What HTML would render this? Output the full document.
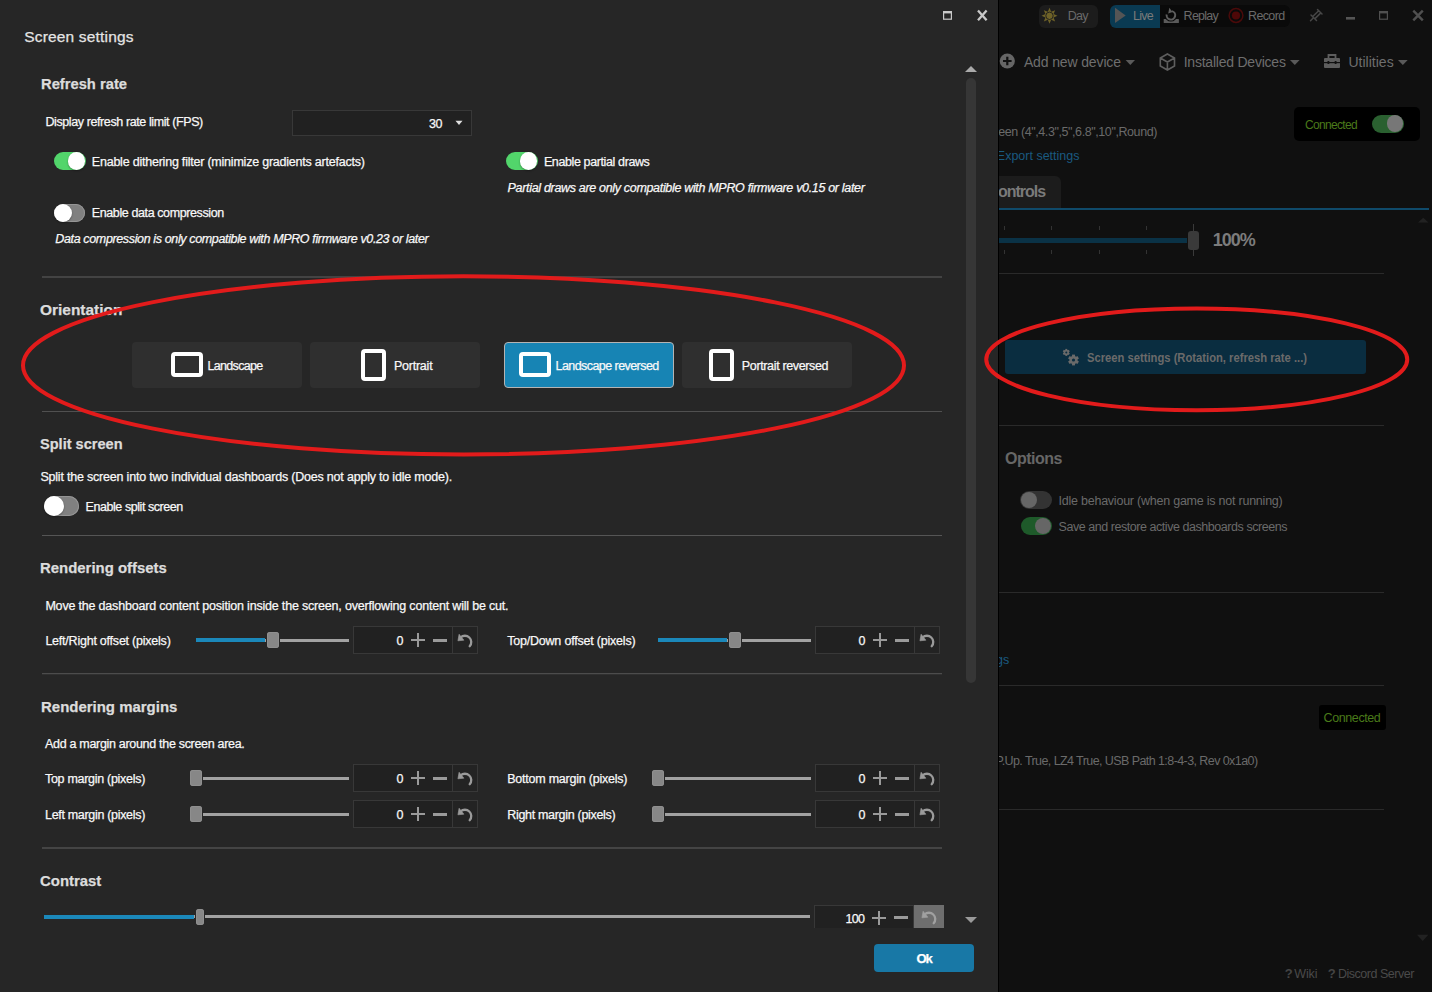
<!DOCTYPE html>
<html><head><meta charset="utf-8"><style>
html,body{margin:0;padding:0;width:1432px;height:992px;overflow:hidden;background:#101010;font-family:"Liberation Sans", sans-serif;}
#rp{position:absolute;left:0;top:0;width:1432px;height:992px;}
#dlg{position:absolute;left:0;top:0;width:998px;height:992px;background:#262626;overflow:hidden;}
</style></head><body>
<div id="rp"><div style="position:absolute;left:1038.5px;top:4.5px;width:59px;height:23px;background:#1c1c1c;border-radius:6px"></div><div style="position:absolute;left:1110px;top:4.5px;width:50px;height:23px;background:#0a3a52;border-radius:6px 0 0 6px"></div><div style="position:absolute;left:1160px;top:4.5px;width:130px;height:22px;background:#0a0a0a;border-radius:0 6px 6px 0"></div><div style="position:absolute;left:1294px;top:107px;width:126px;height:34px;background:#000000;border-radius:5px"></div><div style="position:absolute;left:1372px;top:114.5px;width:32px;height:18px;background:#2a6030;border-radius:9px"></div><div style="position:absolute;left:1386.5px;top:115.3px;width:16.5px;height:16.5px;background:#777777;border-radius:50%"></div><div style="position:absolute;left:960px;top:175.5px;width:101px;height:32.5px;background:#1c1c1c;border-radius:6px 6px 0 0"></div><div style="position:absolute;left:999px;top:208px;width:430px;height:2px;background:#0f4a6a;"></div><div style="position:absolute;left:1418px;top:217px;width:0px;height:0px;background:transparent;"></div><div style="position:absolute;left:999px;top:237.5px;width:188px;height:5px;background:#0a3246;"></div><div style="position:absolute;left:1004px;top:226px;width:1px;height:4px;background:#333333;"></div><div style="position:absolute;left:1004px;top:250px;width:1px;height:4px;background:#333333;"></div><div style="position:absolute;left:1051px;top:226px;width:1px;height:4px;background:#333333;"></div><div style="position:absolute;left:1051px;top:250px;width:1px;height:4px;background:#333333;"></div><div style="position:absolute;left:1098.5px;top:226px;width:1px;height:4px;background:#333333;"></div><div style="position:absolute;left:1098.5px;top:250px;width:1px;height:4px;background:#333333;"></div><div style="position:absolute;left:1145.6px;top:226px;width:1px;height:4px;background:#333333;"></div><div style="position:absolute;left:1145.6px;top:250px;width:1px;height:4px;background:#333333;"></div><div style="position:absolute;left:1193px;top:224px;width:1px;height:32px;background:#3a3a3a;"></div><div style="position:absolute;left:1187.5px;top:230.5px;width:11px;height:19.5px;background:#3a3a3a;border-radius:3px"></div><div style="position:absolute;left:999px;top:273px;width:385px;height:1px;background:#2a2a2a;"></div><div style="position:absolute;left:1005px;top:340px;width:361px;height:34px;background:#0a2d40;border-radius:3px"></div><div style="position:absolute;left:999px;top:425px;width:385px;height:1px;background:#2a2a2a;"></div><div style="position:absolute;left:1020px;top:491px;width:32px;height:18px;background:#333333;border-radius:9px"></div><div style="position:absolute;left:1021px;top:492px;width:16px;height:16px;background:#666666;border-radius:50%"></div><div style="position:absolute;left:1021px;top:517px;width:31px;height:17.5px;background:#1e5a2a;border-radius:9px"></div><div style="position:absolute;left:1035px;top:517.8px;width:16px;height:16px;background:#666666;border-radius:50%"></div><div style="position:absolute;left:999px;top:592px;width:385px;height:1px;background:#2a2a2a;"></div><div style="position:absolute;left:999px;top:685px;width:385px;height:1px;background:#2a2a2a;"></div><div style="position:absolute;left:1319px;top:704.5px;width:66.5px;height:25px;background:#000000;border-radius:3px"></div><div style="position:absolute;left:999px;top:809px;width:385px;height:1px;background:#2a2a2a;"></div><div style="position:absolute;left:1067.70px;top:10.00px;font-size:12.5px;line-height:12.5px;font-weight:400;font-style:normal;color:#6a6a6a;letter-spacing:-0.745px;white-space:pre;">Day</div><div style="position:absolute;left:1133.00px;top:10.00px;font-size:12.5px;line-height:12.5px;font-weight:400;font-style:normal;color:#7a7a7a;letter-spacing:-0.734px;white-space:pre;">Live</div><div style="position:absolute;left:1183.60px;top:10.00px;font-size:12.5px;line-height:12.5px;font-weight:400;font-style:normal;color:#6a6a6a;letter-spacing:-0.737px;white-space:pre;">Replay</div><div style="position:absolute;left:1248.00px;top:10.00px;font-size:12.5px;line-height:12.5px;font-weight:400;font-style:normal;color:#6a6a6a;letter-spacing:-0.633px;white-space:pre;">Record</div><div style="position:absolute;left:1023.90px;top:55.00px;font-size:14px;line-height:14px;font-weight:400;font-style:normal;color:#6e6e6e;letter-spacing:-0.132px;white-space:pre;">Add new device</div><div style="position:absolute;left:1183.70px;top:55.00px;font-size:14px;line-height:14px;font-weight:400;font-style:normal;color:#6e6e6e;letter-spacing:-0.225px;white-space:pre;">Installed Devices</div><div style="position:absolute;left:1348.40px;top:55.00px;font-size:14px;line-height:14px;font-weight:400;font-style:normal;color:#6e6e6e;letter-spacing:0.019px;white-space:pre;">Utilities</div><div style="position:absolute;left:1305.00px;top:119.00px;font-size:12px;line-height:12px;font-weight:400;font-style:normal;color:#4a7a1a;letter-spacing:-0.672px;white-space:pre;">Connected</div><div style="position:absolute;left:994.50px;top:126.00px;font-size:12.5px;line-height:12.5px;font-weight:400;font-style:normal;color:#6a6a6a;letter-spacing:-0.415px;white-space:pre;">reen (4",4.3",5",6.8",10",Round)</div><div style="position:absolute;left:996.81px;top:150.00px;font-size:12.5px;line-height:12.5px;font-weight:400;font-style:normal;color:#1a5a80;letter-spacing:0.000px;white-space:pre;">Export settings</div><div style="position:absolute;left:998.00px;top:184.00px;font-size:16px;line-height:16px;font-weight:700;font-style:normal;color:#7a7a7a;letter-spacing:-1.031px;white-space:pre;">ontrols</div><div style="position:absolute;left:1212.80px;top:231.00px;font-size:18px;line-height:18px;font-weight:700;font-style:normal;color:#7c7c7c;letter-spacing:-1.012px;white-space:pre;">100%</div><div style="position:absolute;left:1087.20px;top:352.00px;font-size:12.5px;line-height:12.5px;font-weight:700;font-style:normal;color:#6a6a6a;letter-spacing:0.000px;white-space:pre;transform:scaleX(0.8972);transform-origin:0 0;">Screen settings (Rotation, refresh rate ...)</div><div style="position:absolute;left:1005.00px;top:451.00px;font-size:16px;line-height:16px;font-weight:700;font-style:normal;color:#666666;letter-spacing:-0.491px;white-space:pre;">Options</div><div style="position:absolute;left:1058.50px;top:495.00px;font-size:12.5px;line-height:12.5px;font-weight:400;font-style:normal;color:#6a6a6a;letter-spacing:-0.231px;white-space:pre;">Idle behaviour (when game is not running)</div><div style="position:absolute;left:1058.50px;top:521.00px;font-size:12.5px;line-height:12.5px;font-weight:400;font-style:normal;color:#6a6a6a;letter-spacing:-0.449px;white-space:pre;">Save and restore active dashboards screens</div><div style="position:absolute;left:880.77px;top:654.00px;font-size:12.5px;line-height:12.5px;font-weight:400;font-style:normal;color:#1a5a80;letter-spacing:0.000px;white-space:pre;">Import / Export settings</div><div style="position:absolute;left:1323.60px;top:712.00px;font-size:12.5px;line-height:12.5px;font-weight:400;font-style:normal;color:#4a7a1a;letter-spacing:-0.408px;white-space:pre;">Connected</div><div style="position:absolute;left:995.50px;top:755.00px;font-size:12.5px;line-height:12.5px;font-weight:400;font-style:normal;color:#6a6a6a;letter-spacing:-0.578px;white-space:pre;">P.Up. True, LZ4 True, USB Path 1:8-4-3, Rev 0x1a0)</div><div style="position:absolute;left:1294.30px;top:968.00px;font-size:12.5px;line-height:12.5px;font-weight:400;font-style:normal;color:#4a4a4a;letter-spacing:-0.152px;white-space:pre;">Wiki</div><div style="position:absolute;left:1337.90px;top:968.00px;font-size:12.5px;line-height:12.5px;font-weight:400;font-style:normal;color:#4a4a4a;letter-spacing:-0.477px;white-space:pre;">Discord Server</div><div style="position:absolute;left:1284.70px;top:967.00px;font-size:13px;line-height:13px;font-weight:700;font-style:normal;color:#444444;letter-spacing:0.047px;white-space:pre;">?</div><div style="position:absolute;left:1327.70px;top:967.00px;font-size:13px;line-height:13px;font-weight:700;font-style:normal;color:#444444;letter-spacing:0.047px;white-space:pre;">?</div><svg style="position:absolute;left:0;top:0" width="1432" height="992"><polygon points="1049.50,7.80 1051.18,11.73 1055.16,10.14 1053.57,14.12 1057.50,15.80 1053.57,17.48 1055.16,21.46 1051.18,19.87 1049.50,23.80 1047.82,19.87 1043.84,21.46 1045.43,17.48 1041.50,15.80 1045.43,14.12 1043.84,10.14 1047.82,11.73" fill="#6e6228"/><circle cx="1049.5" cy="15.8" r="3.7" fill="none" stroke="#1c1c1c" stroke-width="0.9"/><polygon points="1115,7.7 1125.7,15.5 1115,23" fill="#555"/><rect x="1163.7" y="19" width="15.2" height="4" rx="0.5" fill="#5a5a5a"/><circle cx="1170.9" cy="15.3" r="4.3" fill="none" stroke="#0a0a0a" stroke-width="4"/><path d="M1172.01 11.15 A4.3 4.3 0 1 1 1166.67 14.55" fill="none" stroke="#5e5e5e" stroke-width="2"/><polygon points="1169.3,7.8 1172.6,12 1168.2,13.6" fill="#5e5e5e"/><circle cx="1236" cy="15.5" r="6.9" fill="none" stroke="#4a0a0a" stroke-width="1.5"/><circle cx="1236" cy="15.5" r="4.1" fill="#4e0808"/><path d="M1317.5 9.5 L1322 14 M1311 15 L1316.5 20.5 M1318.7 10.8 L1313 16.3 M1320.8 12.9 L1315.2 18.4 M1313.2 18 L1310.5 20.8" stroke="#474747" stroke-width="1.5" fill="none" stroke-linecap="round"/><rect x="1346" y="17" width="9" height="2.6" fill="#555"/><rect x="1379.6" y="11.8" width="7.8" height="7.4" fill="none" stroke="#505050" stroke-width="1.2"/><rect x="1379" y="11" width="9" height="2.4" fill="#505050"/><path d="M1413.3 10.6 L1422.8 20.4 M1422.8 10.6 L1413.3 20.4" stroke="#505050" stroke-width="2.4"/><circle cx="1007.3" cy="61" r="7.6" fill="#666"/><path d="M1003 61 H1011.6 M1007.3 56.7 V65.3" stroke="#111" stroke-width="2.2"/><polygon points="1125.6,60 1135,60 1130.3,65" fill="#5a5a5a"/><path d="M1167.4 54 L1174.5 58 L1174.5 66 L1167.4 70 L1160.3 66 L1160.3 58 Z M1160.3 58 L1167.4 62 L1174.5 58 M1167.4 62 V70" fill="none" stroke="#5e5e5e" stroke-width="1.6"/><polygon points="1290,60 1299.6,60 1294.8,65" fill="#5a5a5a"/><path d="M1328.5 58 V55 H1335.5 V58" fill="none" stroke="#5e5e5e" stroke-width="1.8"/><rect x="1324" y="58" width="16" height="10" rx="1" fill="#5e5e5e"/><rect x="1324" y="62" width="16" height="1.2" fill="#111"/><rect x="1327.5" y="61" width="1.8" height="3" fill="#111"/><rect x="1334.7" y="61" width="1.8" height="3" fill="#111"/><polygon points="1398,60 1407.7,60 1402.85,65" fill="#5a5a5a"/><circle cx="1066.3" cy="352.4" r="2.62" fill="#6a6a6a"/><rect x="1065.34" y="348.90" width="1.93" height="7.00" fill="#6a6a6a" transform="rotate(0 1066.3 352.4)"/><rect x="1065.34" y="348.90" width="1.93" height="7.00" fill="#6a6a6a" transform="rotate(60 1066.3 352.4)"/><rect x="1065.34" y="348.90" width="1.93" height="7.00" fill="#6a6a6a" transform="rotate(120 1066.3 352.4)"/><circle cx="1066.3" cy="352.4" r="1.0" fill="#0a2d40"/><circle cx="1073.5" cy="360" r="4.05" fill="#6a6a6a"/><rect x="1072.02" y="354.60" width="2.97" height="10.80" fill="#6a6a6a" transform="rotate(0 1073.5 360)"/><rect x="1072.02" y="354.60" width="2.97" height="10.80" fill="#6a6a6a" transform="rotate(60 1073.5 360)"/><rect x="1072.02" y="354.60" width="2.97" height="10.80" fill="#6a6a6a" transform="rotate(120 1073.5 360)"/><circle cx="1073.5" cy="360" r="1.6" fill="#0a2d40"/><polygon points="1418,222.6 1428.5,222.6 1423.25,217.8" fill="#222"/><polygon points="1417,934.7 1428.4,934.7 1422.7,941" fill="#222"/></svg></div>
<div style="position:absolute;left:998px;top:0;width:1px;height:992px;background:#000000"></div>
<div id="dlg"><div style="position:absolute;left:292px;top:110px;width:178px;height:23.5px;border:1px solid #383838;background:#212121"></div><svg style="position:absolute;left:455px;top:120px" width="9" height="6"><polygon points="0.5,0.8 7.5,0.8 4,5" fill="#e0e0e0"/></svg><div style="position:absolute;left:54px;top:152px;width:32px;height:18px;border-radius:9.0px;background:#52d56b;"></div><div style="position:absolute;left:67.5px;top:152.25px;width:17.5px;height:17.5px;border-radius:50%;background:#ffffff;box-shadow:0 1px 2px rgba(0,0,0,0.35);"></div><div style="position:absolute;left:506px;top:152px;width:32px;height:18px;border-radius:9.0px;background:#52d56b;"></div><div style="position:absolute;left:519.5px;top:152.25px;width:17.5px;height:17.5px;border-radius:50%;background:#ffffff;box-shadow:0 1px 2px rgba(0,0,0,0.35);"></div><div style="position:absolute;left:54px;top:204px;width:31px;height:18px;border-radius:9.0px;background:#808080;box-shadow:inset 0 0 0 1px #959595;"></div><div style="position:absolute;left:54px;top:203.6px;width:18px;height:18px;border-radius:50%;background:#ffffff;box-shadow:0 1px 2px rgba(0,0,0,0.35);"></div><div style="position:absolute;left:42px;top:276px;width:900px;height:2px;background:#434343"></div><div style="position:absolute;left:132px;top:342px;width:170px;height:45.5px;border-radius:4px;background:#2f2f2f"></div><div style="position:absolute;left:310px;top:342px;width:170px;height:45.5px;border-radius:4px;background:#2f2f2f"></div><div style="position:absolute;left:504px;top:342px;width:168px;height:43.5px;border:1px solid #b4b4b4;border-radius:4px;background:#1784b4"></div><div style="position:absolute;left:682px;top:342px;width:170px;height:45.5px;border-radius:4px;background:#2f2f2f"></div><div style="position:absolute;left:171.3px;top:352.2px;width:23.6px;height:16.6px;border:4px solid #ffffff;border-radius:4px"></div><div style="position:absolute;left:361px;top:348.6px;width:17px;height:24.4px;border:4px solid #ffffff;border-radius:4px"></div><div style="position:absolute;left:519px;top:352px;width:24px;height:17px;border:4px solid #ffffff;border-radius:4px"></div><div style="position:absolute;left:709px;top:348.6px;width:17px;height:24.4px;border:4px solid #ffffff;border-radius:4px"></div><div style="position:absolute;left:42px;top:411px;width:900px;height:1px;background:#505050"></div><div style="position:absolute;left:44px;top:496px;width:35px;height:20px;border-radius:10.0px;background:#808080;box-shadow:inset 0 0 0 1px #959595;"></div><div style="position:absolute;left:44px;top:496px;width:20px;height:20px;border-radius:50%;background:#ffffff;box-shadow:0 1px 2px rgba(0,0,0,0.35);"></div><div style="position:absolute;left:42px;top:535px;width:900px;height:1px;background:#555555"></div><div style="position:absolute;left:196px;top:639px;width:153px;height:3px;background:#a2a2a2"></div><div style="position:absolute;left:196px;top:638px;width:69px;height:4px;background:#1b88ba"></div><div style="position:absolute;left:266px;top:632px;width:14px;height:16px;background:#262626"></div><div style="position:absolute;left:267px;top:632px;width:12px;height:16px;border-radius:3px;background:#878787;box-shadow:inset 0 0 0 1px #8f8f8f"></div><div style="position:absolute;left:353px;top:626px;width:98px;height:26px;border:1px solid #383838;background:#212121"></div><div style="position:absolute;left:453px;top:626px;width:24px;height:26px;border:1px solid #383838;border-left:none;background:#232323"></div><div style="position:absolute;left:411px;top:638.9px;width:14px;height:2.2px;background:#9a9a9a"></div><div style="position:absolute;left:416.9px;top:633px;width:2.2px;height:14px;background:#9a9a9a"></div><div style="position:absolute;left:433px;top:638.5px;width:14px;height:3px;background:#9a9a9a"></div><svg style="position:absolute;left:455.3px;top:631.8px" width="20" height="20" viewBox="-10 -10 20 20"><path d="M-4.45 -4.45 A6.3 6.3 0 0 1 4.68 4.22" fill="none" stroke="#9a9a9a" stroke-width="2.3" stroke-linecap="round"/><path d="M-5.9 -7.8 L-7.1 -1.2 L-1.1 -1.8 Z" fill="#9a9a9a" stroke="#9a9a9a" stroke-width="0.6" stroke-linejoin="round"/></svg><div style="position:absolute;left:658px;top:639px;width:153px;height:3px;background:#a2a2a2"></div><div style="position:absolute;left:658px;top:638px;width:69px;height:4px;background:#1b88ba"></div><div style="position:absolute;left:728px;top:632px;width:14px;height:16px;background:#262626"></div><div style="position:absolute;left:729px;top:632px;width:12px;height:16px;border-radius:3px;background:#878787;box-shadow:inset 0 0 0 1px #8f8f8f"></div><div style="position:absolute;left:815px;top:626px;width:98px;height:26px;border:1px solid #383838;background:#212121"></div><div style="position:absolute;left:915px;top:626px;width:24px;height:26px;border:1px solid #383838;border-left:none;background:#232323"></div><div style="position:absolute;left:873px;top:638.9px;width:14px;height:2.2px;background:#9a9a9a"></div><div style="position:absolute;left:878.9px;top:633px;width:2.2px;height:14px;background:#9a9a9a"></div><div style="position:absolute;left:895px;top:638.5px;width:14px;height:3px;background:#9a9a9a"></div><svg style="position:absolute;left:917.3px;top:631.8px" width="20" height="20" viewBox="-10 -10 20 20"><path d="M-4.45 -4.45 A6.3 6.3 0 0 1 4.68 4.22" fill="none" stroke="#9a9a9a" stroke-width="2.3" stroke-linecap="round"/><path d="M-5.9 -7.8 L-7.1 -1.2 L-1.1 -1.8 Z" fill="#9a9a9a" stroke="#9a9a9a" stroke-width="0.6" stroke-linejoin="round"/></svg><div style="position:absolute;left:42px;top:673px;width:900px;height:1px;background:#4c4c4c"></div><div style="position:absolute;left:42px;top:674px;width:900px;height:1px;background:#303030"></div><div style="position:absolute;left:190px;top:777px;width:159px;height:3px;background:#a2a2a2"></div><div style="position:absolute;left:189px;top:770px;width:14px;height:16px;background:#262626"></div><div style="position:absolute;left:190px;top:770px;width:12px;height:16px;border-radius:3px;background:#878787;box-shadow:inset 0 0 0 1px #8f8f8f"></div><div style="position:absolute;left:353px;top:764px;width:98px;height:26px;border:1px solid #383838;background:#212121"></div><div style="position:absolute;left:453px;top:764px;width:24px;height:26px;border:1px solid #383838;border-left:none;background:#232323"></div><div style="position:absolute;left:411px;top:776.9px;width:14px;height:2.2px;background:#9a9a9a"></div><div style="position:absolute;left:416.9px;top:771px;width:2.2px;height:14px;background:#9a9a9a"></div><div style="position:absolute;left:433px;top:776.5px;width:14px;height:3px;background:#9a9a9a"></div><svg style="position:absolute;left:455.3px;top:769.8px" width="20" height="20" viewBox="-10 -10 20 20"><path d="M-4.45 -4.45 A6.3 6.3 0 0 1 4.68 4.22" fill="none" stroke="#9a9a9a" stroke-width="2.3" stroke-linecap="round"/><path d="M-5.9 -7.8 L-7.1 -1.2 L-1.1 -1.8 Z" fill="#9a9a9a" stroke="#9a9a9a" stroke-width="0.6" stroke-linejoin="round"/></svg><div style="position:absolute;left:652px;top:777px;width:159px;height:3px;background:#a2a2a2"></div><div style="position:absolute;left:651px;top:770px;width:14px;height:16px;background:#262626"></div><div style="position:absolute;left:652px;top:770px;width:12px;height:16px;border-radius:3px;background:#878787;box-shadow:inset 0 0 0 1px #8f8f8f"></div><div style="position:absolute;left:815px;top:764px;width:98px;height:26px;border:1px solid #383838;background:#212121"></div><div style="position:absolute;left:915px;top:764px;width:24px;height:26px;border:1px solid #383838;border-left:none;background:#232323"></div><div style="position:absolute;left:873px;top:776.9px;width:14px;height:2.2px;background:#9a9a9a"></div><div style="position:absolute;left:878.9px;top:771px;width:2.2px;height:14px;background:#9a9a9a"></div><div style="position:absolute;left:895px;top:776.5px;width:14px;height:3px;background:#9a9a9a"></div><svg style="position:absolute;left:917.3px;top:769.8px" width="20" height="20" viewBox="-10 -10 20 20"><path d="M-4.45 -4.45 A6.3 6.3 0 0 1 4.68 4.22" fill="none" stroke="#9a9a9a" stroke-width="2.3" stroke-linecap="round"/><path d="M-5.9 -7.8 L-7.1 -1.2 L-1.1 -1.8 Z" fill="#9a9a9a" stroke="#9a9a9a" stroke-width="0.6" stroke-linejoin="round"/></svg><div style="position:absolute;left:190px;top:813px;width:159px;height:3px;background:#a2a2a2"></div><div style="position:absolute;left:189px;top:806px;width:14px;height:16px;background:#262626"></div><div style="position:absolute;left:190px;top:806px;width:12px;height:16px;border-radius:3px;background:#878787;box-shadow:inset 0 0 0 1px #8f8f8f"></div><div style="position:absolute;left:353px;top:800px;width:98px;height:26px;border:1px solid #383838;background:#212121"></div><div style="position:absolute;left:453px;top:800px;width:24px;height:26px;border:1px solid #383838;border-left:none;background:#232323"></div><div style="position:absolute;left:411px;top:812.9px;width:14px;height:2.2px;background:#9a9a9a"></div><div style="position:absolute;left:416.9px;top:807px;width:2.2px;height:14px;background:#9a9a9a"></div><div style="position:absolute;left:433px;top:812.5px;width:14px;height:3px;background:#9a9a9a"></div><svg style="position:absolute;left:455.3px;top:805.8px" width="20" height="20" viewBox="-10 -10 20 20"><path d="M-4.45 -4.45 A6.3 6.3 0 0 1 4.68 4.22" fill="none" stroke="#9a9a9a" stroke-width="2.3" stroke-linecap="round"/><path d="M-5.9 -7.8 L-7.1 -1.2 L-1.1 -1.8 Z" fill="#9a9a9a" stroke="#9a9a9a" stroke-width="0.6" stroke-linejoin="round"/></svg><div style="position:absolute;left:652px;top:813px;width:159px;height:3px;background:#a2a2a2"></div><div style="position:absolute;left:651px;top:806px;width:14px;height:16px;background:#262626"></div><div style="position:absolute;left:652px;top:806px;width:12px;height:16px;border-radius:3px;background:#878787;box-shadow:inset 0 0 0 1px #8f8f8f"></div><div style="position:absolute;left:815px;top:800px;width:98px;height:26px;border:1px solid #383838;background:#212121"></div><div style="position:absolute;left:915px;top:800px;width:24px;height:26px;border:1px solid #383838;border-left:none;background:#232323"></div><div style="position:absolute;left:873px;top:812.9px;width:14px;height:2.2px;background:#9a9a9a"></div><div style="position:absolute;left:878.9px;top:807px;width:2.2px;height:14px;background:#9a9a9a"></div><div style="position:absolute;left:895px;top:812.5px;width:14px;height:3px;background:#9a9a9a"></div><svg style="position:absolute;left:917.3px;top:805.8px" width="20" height="20" viewBox="-10 -10 20 20"><path d="M-4.45 -4.45 A6.3 6.3 0 0 1 4.68 4.22" fill="none" stroke="#9a9a9a" stroke-width="2.3" stroke-linecap="round"/><path d="M-5.9 -7.8 L-7.1 -1.2 L-1.1 -1.8 Z" fill="#9a9a9a" stroke="#9a9a9a" stroke-width="0.6" stroke-linejoin="round"/></svg><div style="position:absolute;left:42px;top:847px;width:900px;height:2px;background:#444444"></div><div style="position:absolute;left:44px;top:915px;width:766px;height:3px;background:#a2a2a2"></div><div style="position:absolute;left:44px;top:915px;width:150px;height:4px;background:#1b88ba"></div><div style="position:absolute;left:195px;top:909px;width:10px;height:16px;background:#262626"></div><div style="position:absolute;left:196px;top:909px;width:8px;height:16px;border-radius:3px;background:#878787;box-shadow:inset 0 0 0 1px #8f8f8f"></div><div style="position:absolute;left:814px;top:905px;width:98px;height:22px;border:1px solid #383838;border-bottom:none;background:#212121"></div><div style="position:absolute;left:914px;top:905px;width:30px;height:23px;background:#6e6e6e"></div><div style="position:absolute;left:872px;top:916.9px;width:14px;height:2.2px;background:#9a9a9a"></div><div style="position:absolute;left:877.9px;top:911px;width:2.2px;height:14px;background:#9a9a9a"></div><div style="position:absolute;left:894px;top:915.7px;width:14px;height:3px;background:#9a9a9a"></div><svg style="position:absolute;left:918.6px;top:908.5px" width="20" height="20" viewBox="-10 -10 20 20"><path d="M-4.45 -4.45 A6.3 6.3 0 0 1 4.68 4.22" fill="none" stroke="#a0a0a0" stroke-width="2.3" stroke-linecap="round"/><path d="M-5.9 -7.8 L-7.1 -1.2 L-1.1 -1.8 Z" fill="#a0a0a0" stroke="#a0a0a0" stroke-width="0.6" stroke-linejoin="round"/></svg><div style="position:absolute;left:0;top:928px;width:960px;height:64px;background:#262626"></div><svg style="position:absolute;left:964px;top:916px" width="14" height="8"><polygon points="1,1 13,1 7,7" fill="#9a9a9a"/></svg><div style="position:absolute;left:874px;top:944px;width:100px;height:28px;border-radius:4px;background:#1878a6"></div><svg style="position:absolute;left:940px;top:8px" width="50" height="16"><rect x="3.6" y="3.6" width="7.8" height="7.6" fill="none" stroke="#c8c8c8" stroke-width="1.2"/><rect x="3" y="3" width="9" height="2.4" fill="#c8c8c8"/><path d="M38 2.4 L46.6 12.2 M46.6 2.4 L38 12.2" stroke="#c8c8c8" stroke-width="2.3"/></svg><svg style="position:absolute;left:960px;top:60px" width="24" height="20"><polygon points="5,12 17,12 11,6" fill="#aaaaaa"/></svg><div style="position:absolute;left:966px;top:77.7px;width:10px;height:605.6px;border-radius:5px;background:#363636"></div><div style="position:absolute;left:24.20px;top:29.00px;font-size:15.5px;line-height:15.5px;font-weight:400;font-style:normal;color:#e4e4e4;letter-spacing:0.177px;white-space:pre;-webkit-text-stroke:0.25px #e4e4e4;">Screen settings</div><div style="position:absolute;left:40.80px;top:76.00px;font-size:15px;line-height:15px;font-weight:700;font-style:normal;color:#dcdcdc;letter-spacing:0.000px;white-space:pre;transform:scaleX(0.9823);transform-origin:0 0;-webkit-text-stroke:0.25px #dcdcdc;">Refresh rate</div><div style="position:absolute;left:45.40px;top:116.00px;font-size:12.5px;line-height:12.5px;font-weight:400;font-style:normal;color:#f8f8f8;letter-spacing:-0.396px;white-space:pre;-webkit-text-stroke:0.25px #f8f8f8;">Display refresh rate limit (FPS)</div><div style="position:absolute;left:429.00px;top:118.00px;font-size:12.5px;line-height:12.5px;font-weight:400;font-style:normal;color:#f8f8f8;letter-spacing:-0.453px;white-space:pre;-webkit-text-stroke:0.25px #f8f8f8;">30</div><div style="position:absolute;left:91.80px;top:156.00px;font-size:12.5px;line-height:12.5px;font-weight:400;font-style:normal;color:#f8f8f8;letter-spacing:-0.220px;white-space:pre;-webkit-text-stroke:0.25px #f8f8f8;">Enable dithering filter (minimize gradients artefacts)</div><div style="position:absolute;left:543.90px;top:156.00px;font-size:12.5px;line-height:12.5px;font-weight:400;font-style:normal;color:#f8f8f8;letter-spacing:-0.383px;white-space:pre;-webkit-text-stroke:0.25px #f8f8f8;">Enable partial draws</div><div style="position:absolute;left:507.60px;top:182.00px;font-size:12.5px;line-height:12.5px;font-weight:400;font-style:italic;color:#f8f8f8;letter-spacing:-0.323px;white-space:pre;-webkit-text-stroke:0.25px #f8f8f8;">Partial draws are only compatible with MPRO firmware v0.15 or later</div><div style="position:absolute;left:91.80px;top:207.00px;font-size:12.5px;line-height:12.5px;font-weight:400;font-style:normal;color:#f8f8f8;letter-spacing:-0.394px;white-space:pre;-webkit-text-stroke:0.25px #f8f8f8;">Enable data compression</div><div style="position:absolute;left:55.30px;top:233.00px;font-size:12.5px;line-height:12.5px;font-weight:400;font-style:italic;color:#f8f8f8;letter-spacing:-0.363px;white-space:pre;-webkit-text-stroke:0.25px #f8f8f8;">Data compression is only compatible with MPRO firmware v0.23 or later</div><div style="position:absolute;left:40.30px;top:302.00px;font-size:15px;line-height:15px;font-weight:700;font-style:normal;color:#dcdcdc;letter-spacing:0.000px;white-space:pre;transform:scaleX(1.0298);transform-origin:0 0;-webkit-text-stroke:0.25px #dcdcdc;">Orientation</div><div style="position:absolute;left:207.50px;top:360.00px;font-size:12.5px;line-height:12.5px;font-weight:400;font-style:normal;color:#f8f8f8;letter-spacing:-0.675px;white-space:pre;-webkit-text-stroke:0.25px #f8f8f8;">Landscape</div><div style="position:absolute;left:393.90px;top:360.00px;font-size:12.5px;line-height:12.5px;font-weight:400;font-style:normal;color:#f8f8f8;letter-spacing:-0.225px;white-space:pre;-webkit-text-stroke:0.25px #f8f8f8;">Portrait</div><div style="position:absolute;left:555.50px;top:360.00px;font-size:12.5px;line-height:12.5px;font-weight:400;font-style:normal;color:#f8f8f8;letter-spacing:-0.560px;white-space:pre;-webkit-text-stroke:0.25px #f8f8f8;">Landscape reversed</div><div style="position:absolute;left:741.80px;top:360.00px;font-size:12.5px;line-height:12.5px;font-weight:400;font-style:normal;color:#f8f8f8;letter-spacing:-0.353px;white-space:pre;-webkit-text-stroke:0.25px #f8f8f8;">Portrait reversed</div><div style="position:absolute;left:40.40px;top:436.00px;font-size:15px;line-height:15px;font-weight:700;font-style:normal;color:#dcdcdc;letter-spacing:0.000px;white-space:pre;transform:scaleX(0.9712);transform-origin:0 0;-webkit-text-stroke:0.25px #dcdcdc;">Split screen</div><div style="position:absolute;left:40.40px;top:471.00px;font-size:12.5px;line-height:12.5px;font-weight:400;font-style:normal;color:#f8f8f8;letter-spacing:-0.202px;white-space:pre;-webkit-text-stroke:0.25px #f8f8f8;">Split the screen into two individual dashboards (Does not apply to idle mode).</div><div style="position:absolute;left:85.60px;top:501.00px;font-size:12.5px;line-height:12.5px;font-weight:400;font-style:normal;color:#f8f8f8;letter-spacing:-0.438px;white-space:pre;-webkit-text-stroke:0.25px #f8f8f8;">Enable split screen</div><div style="position:absolute;left:40.40px;top:560.00px;font-size:15px;line-height:15px;font-weight:700;font-style:normal;color:#dcdcdc;letter-spacing:0.000px;white-space:pre;transform:scaleX(0.9944);transform-origin:0 0;-webkit-text-stroke:0.25px #dcdcdc;">Rendering offsets</div><div style="position:absolute;left:45.40px;top:600.00px;font-size:12.5px;line-height:12.5px;font-weight:400;font-style:normal;color:#f8f8f8;letter-spacing:-0.189px;white-space:pre;-webkit-text-stroke:0.25px #f8f8f8;">Move the dashboard content position inside the screen, overflowing content will be cut.</div><div style="position:absolute;left:45.40px;top:635.00px;font-size:12.5px;line-height:12.5px;font-weight:400;font-style:normal;color:#f8f8f8;letter-spacing:-0.227px;white-space:pre;-webkit-text-stroke:0.25px #f8f8f8;">Left/Right offset (pixels)</div><div style="position:absolute;left:396.40px;top:635.00px;font-size:12.5px;line-height:12.5px;font-weight:400;font-style:normal;color:#f8f8f8;letter-spacing:0.047px;white-space:pre;-webkit-text-stroke:0.25px #f8f8f8;">0</div><div style="position:absolute;left:507.20px;top:635.00px;font-size:12.5px;line-height:12.5px;font-weight:400;font-style:normal;color:#f8f8f8;letter-spacing:-0.207px;white-space:pre;-webkit-text-stroke:0.25px #f8f8f8;">Top/Down offset (pixels)</div><div style="position:absolute;left:858.50px;top:635.00px;font-size:12.5px;line-height:12.5px;font-weight:400;font-style:normal;color:#f8f8f8;letter-spacing:0.047px;white-space:pre;-webkit-text-stroke:0.25px #f8f8f8;">0</div><div style="position:absolute;left:40.60px;top:699.00px;font-size:15px;line-height:15px;font-weight:700;font-style:normal;color:#dcdcdc;letter-spacing:0.000px;white-space:pre;transform:scaleX(0.9978);transform-origin:0 0;-webkit-text-stroke:0.25px #dcdcdc;">Rendering margins</div><div style="position:absolute;left:45.00px;top:738.00px;font-size:12.5px;line-height:12.5px;font-weight:400;font-style:normal;color:#f8f8f8;letter-spacing:-0.307px;white-space:pre;-webkit-text-stroke:0.25px #f8f8f8;">Add a margin around the screen area.</div><div style="position:absolute;left:45.00px;top:773.00px;font-size:12.5px;line-height:12.5px;font-weight:400;font-style:normal;color:#f8f8f8;letter-spacing:-0.294px;white-space:pre;-webkit-text-stroke:0.25px #f8f8f8;">Top margin (pixels)</div><div style="position:absolute;left:396.50px;top:773.00px;font-size:12.5px;line-height:12.5px;font-weight:400;font-style:normal;color:#f8f8f8;letter-spacing:0.047px;white-space:pre;-webkit-text-stroke:0.25px #f8f8f8;">0</div><div style="position:absolute;left:507.20px;top:773.00px;font-size:12.5px;line-height:12.5px;font-weight:400;font-style:normal;color:#f8f8f8;letter-spacing:-0.229px;white-space:pre;-webkit-text-stroke:0.25px #f8f8f8;">Bottom margin (pixels)</div><div style="position:absolute;left:858.50px;top:773.00px;font-size:12.5px;line-height:12.5px;font-weight:400;font-style:normal;color:#f8f8f8;letter-spacing:0.047px;white-space:pre;-webkit-text-stroke:0.25px #f8f8f8;">0</div><div style="position:absolute;left:45.00px;top:809.00px;font-size:12.5px;line-height:12.5px;font-weight:400;font-style:normal;color:#f8f8f8;letter-spacing:-0.315px;white-space:pre;-webkit-text-stroke:0.25px #f8f8f8;">Left margin (pixels)</div><div style="position:absolute;left:396.50px;top:809.00px;font-size:12.5px;line-height:12.5px;font-weight:400;font-style:normal;color:#f8f8f8;letter-spacing:0.047px;white-space:pre;-webkit-text-stroke:0.25px #f8f8f8;">0</div><div style="position:absolute;left:507.20px;top:809.00px;font-size:12.5px;line-height:12.5px;font-weight:400;font-style:normal;color:#f8f8f8;letter-spacing:-0.306px;white-space:pre;-webkit-text-stroke:0.25px #f8f8f8;">Right margin (pixels)</div><div style="position:absolute;left:858.50px;top:809.00px;font-size:12.5px;line-height:12.5px;font-weight:400;font-style:normal;color:#f8f8f8;letter-spacing:0.047px;white-space:pre;-webkit-text-stroke:0.25px #f8f8f8;">0</div><div style="position:absolute;left:40.40px;top:873.00px;font-size:15px;line-height:15px;font-weight:700;font-style:normal;color:#dcdcdc;letter-spacing:0.000px;white-space:pre;transform:scaleX(0.9940);transform-origin:0 0;-webkit-text-stroke:0.25px #dcdcdc;">Contrast</div><div style="position:absolute;left:845.50px;top:913.00px;font-size:12.5px;line-height:12.5px;font-weight:400;font-style:normal;color:#f8f8f8;letter-spacing:-0.686px;white-space:pre;-webkit-text-stroke:0.25px #f8f8f8;">100</div><div style="position:absolute;left:916.40px;top:952.00px;font-size:13px;line-height:13px;font-weight:700;font-style:normal;color:#ffffff;letter-spacing:-0.972px;white-space:pre;-webkit-text-stroke:0.25px #ffffff;">Ok</div></div>
<svg style="position:absolute;left:0;top:0" width="1432" height="992"><ellipse cx="463.5" cy="365.4" rx="440.5" ry="89.1" fill="none" stroke="#e21b1b" stroke-width="4"/><ellipse cx="1196.75" cy="359.4" rx="210.5" ry="50.9" fill="none" stroke="#e21b1b" stroke-width="4"/></svg>
</body></html>
